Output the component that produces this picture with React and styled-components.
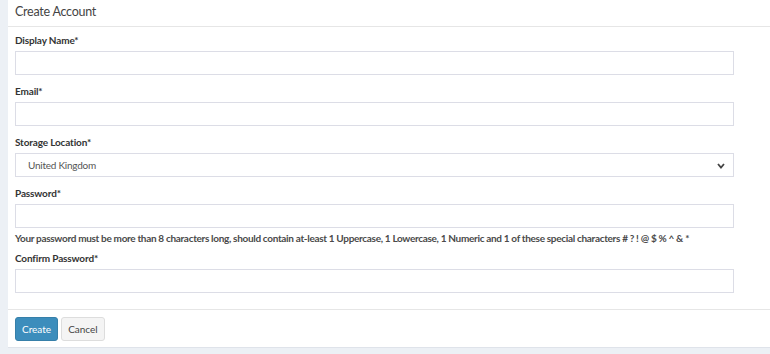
import React from 'react';
import styled, { createGlobalStyle } from 'styled-components';

const GlobalStyle = createGlobalStyle`
  html, body {
    margin: 0;
    padding: 0;
    background: #ecf0f5;
  }
  body {
    font-family: Lato, "Liberation Sans", sans-serif;
    color: #333;
  }
  * { box-sizing: border-box; }
`;

const Page = styled.div`
  padding: 0 0 0 8px;
  width: 770px;
  height: 354px;
`;

const Box = styled.div`
  background: #ffffff;
  border-bottom: 1px solid #dfe3ea;
`;

const BoxHeader = styled.div`
  height: 27px;
  padding: 4px 7px 0;
  border-bottom: 1.5px solid #e6e6e6;
  font-size: 12.5px;
  letter-spacing: -0.25px;
  color: #444;
`;

const BoxBody = styled.div`
  padding: 6px 36px 16px 7px;
`;

const Group = styled.div`
  margin-bottom: ${p => (p.$last ? '0' : p.$tight ? '1px' : '9px')};
`;

const Label = styled.label`
  display: block;
  font-size: 10px;
  font-weight: bold;
  letter-spacing: -0.15px;
  color: #333;
  line-height: 14px;
  margin-bottom: 4px;
`;

const Input = styled.input`
  display: block;
  width: 100%;
  height: 24px;
  border: 1px solid #dcdde6;
  border-radius: 0;
  padding: 0 12px;
  font-family: inherit;
  font-size: 11px;
  outline: none;
  background: #fff;
`;

const SelectWrap = styled.div`
  position: relative;
  height: 24px;
  border: 1px solid #dcdde6;
  padding: 0 12px;
  display: flex;
  align-items: center;
  font-size: 10px;
  letter-spacing: -0.25px;
  color: #555;
`;

const Chevron = styled.svg`
  position: absolute;
  right: 8px;
  top: 9px;
`;

const Help = styled.div`
  font-size: 10px;
  font-weight: bold;
  letter-spacing: -0.32px;
  color: #4a4a4a;
  line-height: 14px;
  white-space: nowrap;
  margin: 3px 0 6px;
`;

const BoxFooter = styled.div`
  border-top: 1.5px solid #e6e6e6;
  padding: 7px 7px 6px;
  display: flex;
  gap: 3px;
`;

const Button = styled.button`
  height: 24px;
  padding: 0 6px;
  border-radius: 3px;
  font-family: inherit;
  font-size: 10px;
  border: 1px solid ${p => (p.$primary ? '#367fa9' : '#ddd')};
  background: ${p => (p.$primary ? '#3c8dbc' : '#f4f4f4')};
  color: ${p => (p.$primary ? '#fff' : '#444')};
  cursor: pointer;
`;

const Field = ({ label, children, tight, last }) => (
  <Group $tight={tight} $last={last}>
    <Label>{label}</Label>
    {children}
  </Group>
);

export default function App() {
  return (
    <>
      <GlobalStyle />
      <Page>
        <Box>
          <BoxHeader>Create Account</BoxHeader>
          <BoxBody>
            <Field label="Display Name*"><Input /></Field>
            <Field label="Email*"><Input /></Field>
            <Field label="Storage Location*">
              <SelectWrap>
                United Kingdom
                <Chevron width="8" height="6" viewBox="0 0 8 6">
                  <path d="M1 1 L4 4.5 L7 1" stroke="#444" strokeWidth="1.8" fill="none" />
                </Chevron>
              </SelectWrap>
            </Field>
            <Field label="Password*" tight><Input type="password" /></Field>
            <Help>
              Your password must be more than 8 characters long, should contain at-least 1 Uppercase, 1 Lowercase, 1 Numeric and 1 of these special characters # ? ! @ $ % ^ &amp; *
            </Help>
            <Field label="Confirm Password*" last><Input type="password" /></Field>
          </BoxBody>
          <BoxFooter>
            <Button $primary>Create</Button>
            <Button>Cancel</Button>
          </BoxFooter>
        </Box>
      </Page>
    </>
  );
}
